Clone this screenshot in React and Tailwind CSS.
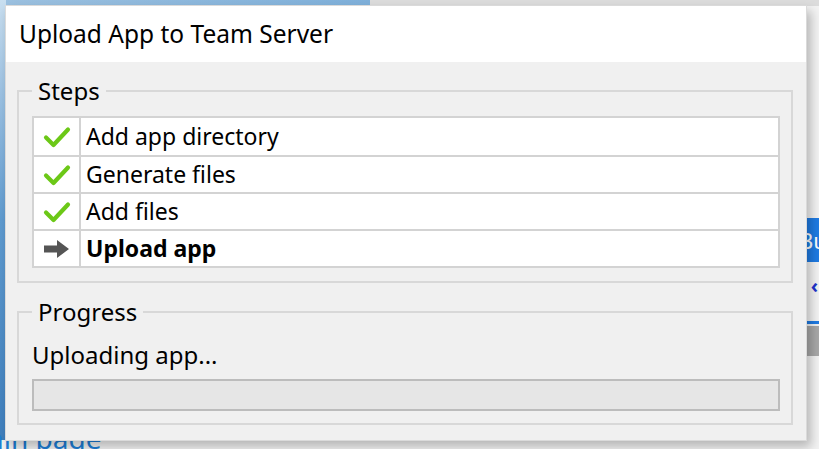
const steps = [
  { label: 'Add app directory', done: true },
  { label: 'Generate files', done: true },
  { label: 'Add files', done: true },
  { label: 'Upload app', done: false },
]

function CheckMark() {
  return (
    <svg width="28" height="24" viewBox="0 0 28 24">
      <path d="M3 12.5 L10.5 20 L25 4.5" fill="none" stroke="#6cc817" strokeWidth="4.2" strokeLinecap="round" strokeLinejoin="round" />
    </svg>
  )
}

function Arrow() {
  return (
    <svg width="28" height="20" viewBox="0 0 28 20">
      <path d="M1 6.5 H14 V1 L26 10 L14 19 V13.5 H1 Z" fill="#555555" />
    </svg>
  )
}

function GroupBox({ title, className, children }) {
  return (
    <fieldset className={`border-2 border-[#d8d8d8] ml-[11px] mr-[13px] pl-[13px] pr-[11px] ${className}`}>
      <legend className="px-[6px] text-[24px] leading-[32px] text-black">{title}</legend>
      {children}
    </fieldset>
  )
}

export default function App() {
  return (
    <div className="relative w-[819px] h-[449px] overflow-hidden bg-[#f3f3f3]" style={{ fontFamily: '"Noto Sans", "Open Sans", sans-serif' }}>
      {/* desktop behind the dialog */}
      <div className="absolute left-0 top-0 w-[370px] h-[6px] bg-gradient-to-r from-[#9cc1e0] to-[#7fb0da]" />
      <div className="absolute left-[370px] top-0 right-0 h-[6px] bg-[#dcdcdc]" />
      <div className="absolute left-0 top-0 w-[6px] h-[440px] bg-gradient-to-b from-[#c9dff0] via-[#5f9bd0] to-[#3f7fbd]" />
      <div className="absolute right-0 top-[218px] w-[14px] h-[44px] bg-[#1f7be3] text-white text-[22px] leading-[44px] overflow-hidden whitespace-nowrap">
        <span className="-ml-[6px]">Bu</span>
      </div>
      <div className="absolute right-[1px] top-[276px] text-[#2233cc] text-[20px] font-bold leading-none">‹</div>
      <div className="absolute right-0 top-[321px] w-[14px] h-[3px] bg-[#1f7be3]" />
      <div className="absolute right-0 top-[326px] w-[14px] h-[30px] bg-[#a8a8a8]" />
      <div className="absolute left-0 top-[424px] text-[#1d7ed6] text-[28px] leading-none whitespace-nowrap -ml-[12px]">ain page</div>

      {/* dialog */}
      <div className="absolute left-[5px] top-[5px] w-[802px] h-[436px] bg-[#f0f0f0] border border-[#dadada] shadow-[4px_6px_10px_rgba(0,0,0,0.25)] flex flex-col">
        <div className="h-[56px] bg-white flex items-center pl-[13px] text-[24.5px] text-black shrink-0">
          Upload App to Team Server
        </div>

        <GroupBox title="Steps" className="mt-[13px] pb-[13px]">
          <div className="mt-[9px] border-2 border-[#d3d3d3] bg-white">
            {steps.map((s, i) => (
              <div key={s.label} className={`flex h-[37px] ${i > 0 ? 'border-t-2 border-[#d3d3d3]' : ''}`}>
                <div className="w-[47px] flex items-center justify-center border-r-2 border-[#d3d3d3]">
                  {s.done ? <CheckMark /> : <Arrow />}
                </div>
                <div className={`pl-[5px] flex items-center text-[23px] text-black ${s.done ? '' : 'font-bold'}`}>
                  {s.label}
                </div>
              </div>
            ))}
          </div>
        </GroupBox>

        <GroupBox title="Progress" className="mt-[13px] pb-[12px]">
          <div className="mt-[11px] text-[24px] leading-[32px] text-black">Uploading app...</div>
          <div className="mt-[8px] h-[32px] bg-[#e6e6e6] border-2 border-[#bcbcbc]" />
        </GroupBox>
      </div>
    </div>
  )
}
